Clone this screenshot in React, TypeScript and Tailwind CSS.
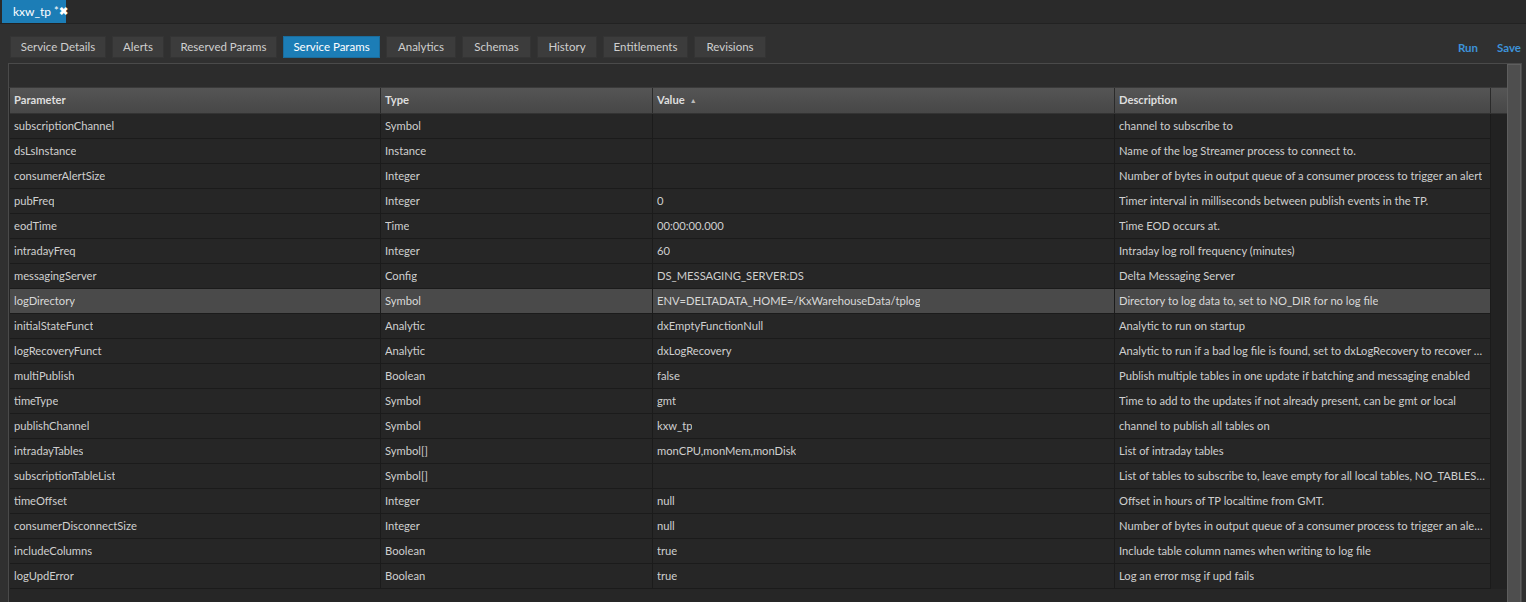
import React from "react";

const rows: [string, string, string, string][] = [
  ["subscriptionChannel", "Symbol", "", "channel to subscribe to"],
  ["dsLsInstance", "Instance", "", "Name of the log Streamer process to connect to."],
  ["consumerAlertSize", "Integer", "", "Number of bytes in output queue of a consumer process to trigger an alert"],
  ["pubFreq", "Integer", "0", "Timer interval in milliseconds between publish events in the TP."],
  ["eodTime", "Time", "00:00:00.000", "Time EOD occurs at."],
  ["intradayFreq", "Integer", "60", "Intraday log roll frequency (minutes)"],
  ["messagingServer", "Config", "DS_MESSAGING_SERVER:DS", "Delta Messaging Server"],
  ["logDirectory", "Symbol", "ENV=DELTADATA_HOME=/KxWarehouseData/tplog", "Directory to log data to, set to NO_DIR for no log file"],
  ["initialStateFunct", "Analytic", "dxEmptyFunctionNull", "Analytic to run on startup"],
  ["logRecoveryFunct", "Analytic", "dxLogRecovery", "Analytic to run if a bad log file is found, set to dxLogRecovery to recover as much as possible"],
  ["multiPublish", "Boolean", "false", "Publish multiple tables in one update if batching and messaging enabled"],
  ["timeType", "Symbol", "gmt", "Time to add to the updates if not already present, can be gmt or local"],
  ["publishChannel", "Symbol", "kxw_tp", "channel to publish all tables on"],
  ["intradayTables", "Symbol[]", "monCPU,monMem,monDisk", "List of intraday tables"],
  ["subscriptionTableList", "Symbol[]", "", "List of tables to subscribe to, leave empty for all local tables, NO_TABLES for none"],
  ["timeOffset", "Integer", "null", "Offset in hours of TP localtime from GMT."],
  ["consumerDisconnectSize", "Integer", "null", "Number of bytes in output queue of a consumer process to trigger an alert and disconnect"],
  ["includeColumns", "Boolean", "true", "Include table column names when writing to log file"],
  ["logUpdError", "Boolean", "true", "Log an error msg if upd fails"],
];

const tabs = [
  ["Service Details", 96],
  ["Alerts", 52],
  ["Reserved Params", 107],
  ["Service Params", 97],
  ["Analytics", 70],
  ["Schemas", 69],
  ["History", 60],
  ["Entitlements", 85],
  ["Revisions", 72],
] as const;

const font = { fontFamily: 'Lato, "Open Sans", sans-serif' };

export default function App() {
  return (
    <div className="w-[1526px] h-[602px] overflow-hidden bg-[#303030] text-[11.2px] text-[#cfcfcf]" style={font}>
      {/* top bar */}
      <div className="h-[24px] bg-[#2a2a2a] border-b border-[#222] flex items-end pl-[2px]">
        <div className="h-[23px] w-[64px] bg-[#1c7db6] text-white flex items-center pl-[11px] text-[12px]">
          <span>kxw_tp</span>
          <span className="ml-[3px] text-[11px]">*</span>
          <span className="text-[11px] font-bold">✖</span>
        </div>
      </div>
      {/* tab row */}
      <div className="flex items-start pt-[12px] pl-[10px] h-[39px]">
        <div className="flex gap-[6px] text-[11.5px]">
          {tabs.map(([t, w]) => (
            <div
              key={t}
              className={
                "h-[22px] flex items-center justify-center border " +
                (t === "Service Params"
                  ? "bg-[#1c7db6] border-[#1a6c9c] text-white"
                  : "bg-[#3c3c3c] border-[#343434] text-[#cfcfcf]")
              }
              style={{ width: w }}
            >
              {t}
            </div>
          ))}
        </div>
        <div className="ml-auto flex gap-[19px] pr-[5px] pt-[3px] font-bold text-[#3d92d9] text-[11.5px]">
          <span>Run</span>
          <span>Save</span>
        </div>
      </div>
      {/* panel */}
      <div className="ml-[8px] mr-[4px] border border-[#4a4a4a] bg-[#262626] h-[600px] flex">
        <div className="flex-1 flex flex-col">
          <div className="h-[24px] bg-[#2c2c2c] border-b border-[#3a3a3a]" />
          <div className="flex pl-[1px]">
            <div className="flex-1">
              <div className="grid grid-cols-[371px_272px_462px_376px_16px] h-[26px] bg-gradient-to-b from-[#555555] to-[#474747] border-b border-[#333] font-bold text-[#dedede]">
                <div className="flex items-center pl-[4px] border-r border-[#2a2a2a]">Parameter</div>
                <div className="flex items-center pl-[4px] border-r border-[#2a2a2a]">Type</div>
                <div className="flex items-center pl-[4px] border-r border-[#2a2a2a]">
                  Value
                  <span className="ml-[5px] text-[7px] text-[#bbb]">▲</span>
                </div>
                <div className="flex items-center pl-[4px] border-r border-[#2a2a2a]">Description</div>
                <div />
              </div>
              <div className="flex">
                <div className="w-[1481px]">
                  {rows.map((r) => {
                    const hl = r[0] === "logDirectory";
                    return (
                      <div
                        key={r[0]}
                        className={
                          "grid grid-cols-[371px_272px_462px_376px] h-[25px] border-b border-[#1b1b1b] " +
                          (hl ? "bg-[#4a4a4a] text-[#d8d8d8]" : "bg-[#262626]")
                        }
                      >
                        {r.map((c, i) => (
                          <div
                            key={i}
                            className="flex items-center pl-[4px] pr-[4px] border-r border-[#1b1b1b] overflow-hidden"
                          >
                            <span className="truncate">{c}</span>
                          </div>
                        ))}
                      </div>
                    );
                  })}
                </div>
                <div className="flex-1 bg-[#222]" />
              </div>
            </div>
          </div>
        </div>
        <div className="w-[15px] bg-[#4e4e4e] border border-[#5e5e5e]" />
      </div>
    </div>
  );
}
